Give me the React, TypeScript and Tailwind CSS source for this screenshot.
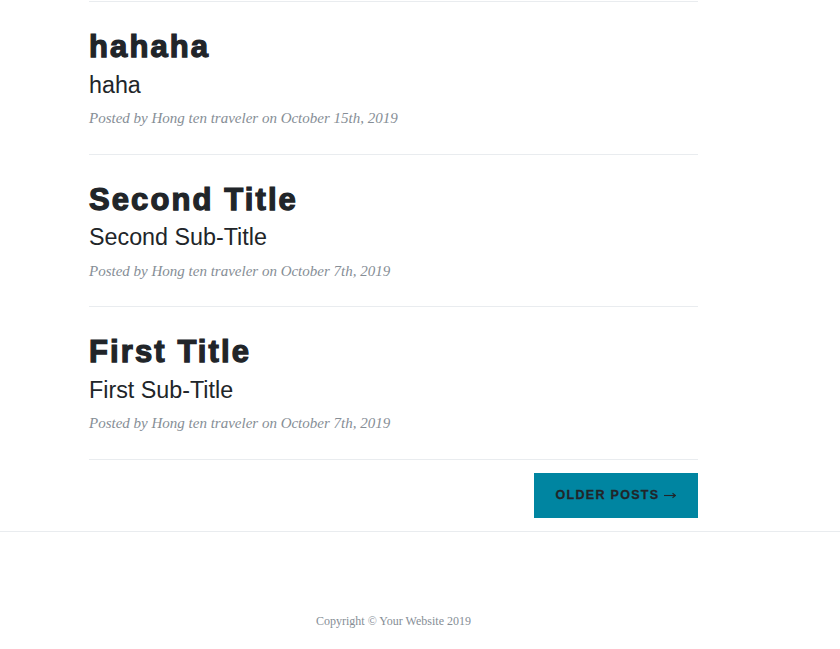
import React from 'react'

type Post = {
  title: string
  subtitle: string
  date: string
}

const posts: Post[] = [
  { title: 'hahaha', subtitle: 'haha', date: 'October 15th, 2019' },
  { title: 'Second Title', subtitle: 'Second Sub-Title', date: 'October 7th, 2019' },
  { title: 'First Title', subtitle: 'First Sub-Title', date: 'October 7th, 2019' },
]

const sans = { fontFamily: '"Liberation Sans", Arial, sans-serif' }

const App: React.FC = () => {
  return (
    <div className="min-h-screen bg-white text-[#212529]">
      <div className="ml-[89px] w-[609px]">
        <hr className="mt-px border-0 border-t border-[#e9ecef]" />

        {posts.map((post) => (
          <div key={post.title}>
            <div className="pt-[26px] pb-[24.67px]">
              <a href="#" className="block text-[#212529] no-underline">
                <h2 className="font-['Liberation_Sans',Arial,sans-serif] text-[31px] font-extrabold leading-[38px] tracking-[2.1px] [-webkit-text-stroke:1.25px_#212529]">
                  {post.title}
                </h2>
                <h3 className="mt-[4.5px] font-['Liberation_Sans',Arial,sans-serif] text-[23.3px] font-light leading-[29px]">
                  {post.subtitle}
                </h3>
              </a>
              <p className="mt-[7.5px] font-['Liberation_Serif','Times_New_Roman',serif] text-[15px] italic leading-[22px] text-[#868e96]">
                Posted by{' '}
                <a href="#" className="text-[#868e96]">
                  Hong ten traveler
                </a>{' '}
                on {post.date}
              </p>
            </div>
            <hr className="border-0 border-t border-[#e9ecef]" />
          </div>
        ))}

        <div className="mt-[13px] mb-[13px] flex justify-end">
          <a
            href="#"
            className="flex h-[45px] w-[164px] items-center justify-center gap-[5px] bg-[#0085a1] text-[12.5px] font-extrabold uppercase tracking-[1.3px] text-[#212529] [-webkit-text-stroke:0.3px_#212529]"
            style={sans}
          >
            <span>Older Posts</span>
            <svg width="12" height="7" viewBox="0 0 12 7" fill="none" className="mt-px">
              <path d="M0 3.5h11.5" stroke="#212529" strokeWidth="1.1" />
              <path d="M8.5 1.2l3 2.3-3 2.3" stroke="#212529" strokeWidth="1.1" />
            </svg>
          </a>
        </div>
      </div>

      <hr className="border-0 border-t border-[#e9ecef]" />

      <footer className="pt-[80px] pb-[60px]">
        <div className="ml-[89px] w-[609px]">
          <p className="text-center font-['Liberation_Serif','Times_New_Roman',serif] text-[12px] text-[#868e96]">
            Copyright &copy; Your Website 2019
          </p>
        </div>
      </footer>
    </div>
  )
}

export default App
